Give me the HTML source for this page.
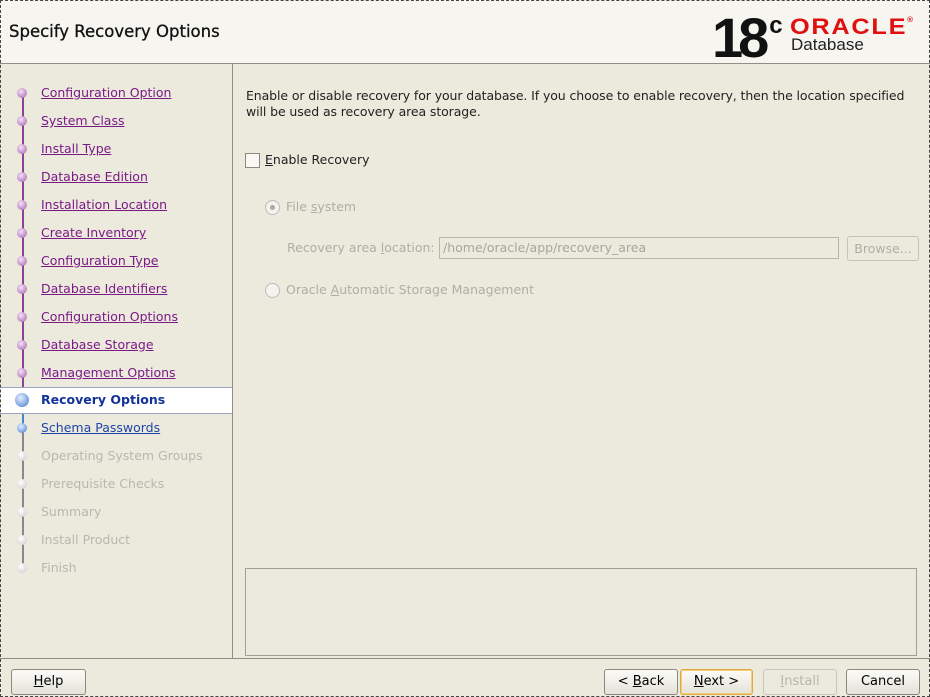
<!DOCTYPE html>
<html><head><style>
body{margin:0;width:930px;height:697px;background:#ece9dd;font-family:"DejaVu Sans","Liberation Sans",sans-serif;font-size:12.5px;position:relative;overflow:hidden}
.a{position:absolute}
#hdr{left:0;top:0;width:930px;height:63px;background:#f6f5ef;border-bottom:1px solid #8f8d84}
#frame{left:0;top:0;width:928px;height:695px;border:1px dashed #444;pointer-events:none}
.step{position:absolute;left:41px;color:#7a1a86;text-decoration:underline;white-space:nowrap}
.dis{color:#b9b7ae;text-decoration:none}
.dot{position:absolute;left:17px;width:10px;height:10px;border-radius:50%}
.btn{position:absolute;top:669px;height:24px;border:1px solid #8a887f;border-radius:3px;background:linear-gradient(#fbfbf8,#e4e2d8);text-align:center;line-height:24px;font-size:13px}
</style></head><body>
<div class="a" id="hdr"></div>
<div class="a" style="left:9px;top:22px;font-size:16.5px;color:#111;-webkit-text-stroke:0.3px #111">Specify Recovery Options</div>
<div class="a" style="left:712px;top:-6px;font-family:'Liberation Sans';font-weight:bold;font-size:56px;letter-spacing:-5px;color:#111;line-height:64px">18<span style="font-size:24px;vertical-align:24px;letter-spacing:0;margin-left:5px">c</span></div>
<div class="a" style="left:790px;top:8px;font-family:'Liberation Sans';font-weight:bold;font-size:22px;color:#e01010;letter-spacing:1.5px;line-height:26px;transform:scaleX(1.15);transform-origin:left">ORACLE<span style="font-size:7px;vertical-align:12px">®</span></div>
<div class="a" style="left:791px;top:35px;font-family:'Liberation Sans';font-size:17px;color:#222">Database</div>
<div class="a" style="left:232px;top:64px;width:1px;height:594px;background:#8f8d84"></div>
<div class="a" style="left:0;top:658px;width:930px;height:1px;background:#8f8d84"></div>
<div class="a" style="left:22px;top:93px;width:2px;height:307px;background:#8e3f98"></div>
<div class="a" style="left:22px;top:400px;width:2px;height:28px;background:#4f7fd0"></div>
<div class="a" style="left:22px;top:428px;width:2px;height:140px;background:#888"></div>
<div class="a" style="left:0;top:387px;width:232px;height:25px;background:#fff;border-top:1px solid #9aa6c4;border-bottom:1px solid #9aa6c4"></div>

<div class="dot" style="top:88px;background:radial-gradient(circle at 40% 35%,#f4e0f6,#a25db0)"></div>
<div class="dot" style="top:116px;background:radial-gradient(circle at 40% 35%,#f4e0f6,#a25db0)"></div>
<div class="dot" style="top:144px;background:radial-gradient(circle at 40% 35%,#f4e0f6,#a25db0)"></div>
<div class="dot" style="top:172px;background:radial-gradient(circle at 40% 35%,#f4e0f6,#a25db0)"></div>
<div class="dot" style="top:200px;background:radial-gradient(circle at 40% 35%,#f4e0f6,#a25db0)"></div>
<div class="dot" style="top:228px;background:radial-gradient(circle at 40% 35%,#f4e0f6,#a25db0)"></div>
<div class="dot" style="top:256px;background:radial-gradient(circle at 40% 35%,#f4e0f6,#a25db0)"></div>
<div class="dot" style="top:284px;background:radial-gradient(circle at 40% 35%,#f4e0f6,#a25db0)"></div>
<div class="dot" style="top:312px;background:radial-gradient(circle at 40% 35%,#f4e0f6,#a25db0)"></div>
<div class="dot" style="top:340px;background:radial-gradient(circle at 40% 35%,#f4e0f6,#a25db0)"></div>
<div class="dot" style="top:368px;background:radial-gradient(circle at 40% 35%,#f4e0f6,#a25db0)"></div>
<div class="dot" style="left:15px;top:393px;width:14px;height:14px;background:radial-gradient(circle at 40% 35%,#e6f0ff,#3d78d0)"></div>
<div class="dot" style="top:423px;background:radial-gradient(circle at 40% 35%,#e6f0ff,#3d78d0)"></div>
<div class="dot" style="top:451px;background:radial-gradient(circle at 40% 35%,#fff,#c8c8c8)"></div>
<div class="dot" style="top:479px;background:radial-gradient(circle at 40% 35%,#fff,#c8c8c8)"></div>
<div class="dot" style="top:507px;background:radial-gradient(circle at 40% 35%,#fff,#c8c8c8)"></div>
<div class="dot" style="top:535px;background:radial-gradient(circle at 40% 35%,#fff,#c8c8c8)"></div>
<div class="dot" style="top:563px;background:radial-gradient(circle at 40% 35%,#fff,#c8c8c8)"></div>

<div class="step" style="top:85px">Configuration Option</div>
<div class="step" style="top:113px">System Class</div>
<div class="step" style="top:141px">Install Type</div>
<div class="step" style="top:169px">Database Edition</div>
<div class="step" style="top:197px">Installation Location</div>
<div class="step" style="top:225px">Create Inventory</div>
<div class="step" style="top:253px">Configuration Type</div>
<div class="step" style="top:281px">Database Identifiers</div>
<div class="step" style="top:309px">Configuration Options</div>
<div class="step" style="top:337px">Database Storage</div>
<div class="step" style="top:365px">Management Options</div>
<div class="step" style="top:392px;color:#12329a;font-weight:bold;text-decoration:none">Recovery Options</div>
<div class="step" style="top:420px;color:#1f45a8">Schema Passwords</div>
<div class="step dis" style="top:448px">Operating System Groups</div>
<div class="step dis" style="top:476px">Prerequisite Checks</div>
<div class="step dis" style="top:504px">Summary</div>
<div class="step dis" style="top:532px">Install Product</div>
<div class="step dis" style="top:560px">Finish</div>

<div class="a" style="left:246px;top:88px;width:670px;line-height:16px;color:#222;letter-spacing:-0.1px">Enable or disable recovery for your database. If you choose to enable recovery, then the location specified will be used as recovery area storage.</div>
<div class="a" style="left:245px;top:153px;width:13px;height:13px;border:1px solid #8a887f;background:#f8f8f4"></div>
<div class="a" style="left:265px;top:152px;color:#222"><u>E</u>nable Recovery</div>
<div class="a" style="left:265px;top:200px;width:13px;height:13px;border:1px solid #bbb;border-radius:50%;background:#f4f3ee"><div style="margin:4px;width:5px;height:5px;border-radius:50%;background:#aaa"></div></div>
<div class="a" style="left:286px;top:199px;color:#b0aea5">File <u>s</u>ystem</div>
<div class="a" style="left:287px;top:240px;color:#b0aea5">Recovery area <u>l</u>ocation:</div>
<div class="a" style="left:439px;top:237px;border:1px solid #b8b6ad;color:#a8a69d;line-height:20px;padding-left:3px;box-sizing:border-box;width:400px;height:22px">/home/oracle/app/recovery_area</div>
<div class="a" style="left:847px;top:236px;width:70px;height:23px;border:1px solid #c4c2b9;border-radius:3px;color:#b0aea5;text-align:center;line-height:23px">Browse...</div>
<div class="a" style="left:265px;top:283px;width:13px;height:13px;border:1px solid #bbb;border-radius:50%;background:#f4f3ee"></div>
<div class="a" style="left:286px;top:282px;color:#b0aea5">Oracle <u>A</u>utomatic Storage Management</div>
<div class="a" style="left:245px;top:568px;width:672px;height:88px;border:1px solid #a09e95;background:#eceadf;box-sizing:border-box"></div>

<div class="btn" style="left:11px;width:73px"><u>H</u>elp</div>
<div class="btn" style="left:604px;width:72px">&lt; <u>B</u>ack</div>
<div class="btn" style="left:680px;width:71px;border-color:#e0a940;box-shadow:inset 0 0 0 1px #f5d07a"><u>N</u>ext &gt;</div>
<div class="btn" style="left:763px;width:72px;color:#b8b6ad;border-color:#c8c6bd;background:#eceadf"><u>I</u>nstall</div>
<div class="btn" style="left:846px;width:72px">Cancel</div>
<div class="a" id="frame"></div>
</body></html>
